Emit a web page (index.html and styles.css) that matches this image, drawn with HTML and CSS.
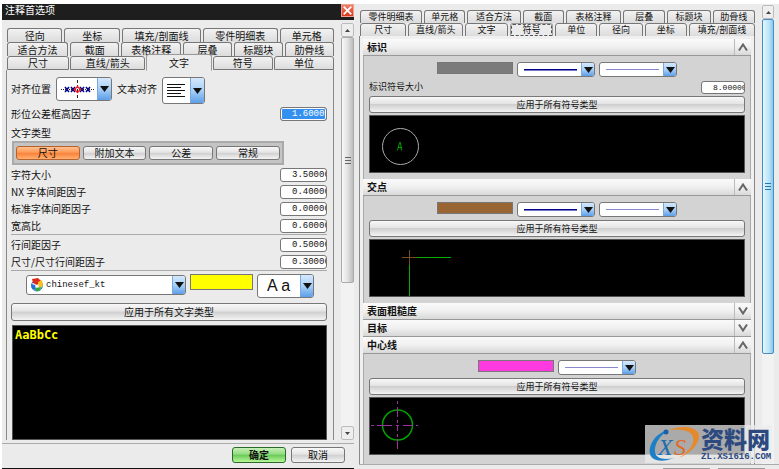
FILE: index.html
```html
<!DOCTYPE html>
<html lang="zh-CN">
<head>
<meta charset="utf-8">
<title>注释首选项</title>
<link rel="stylesheet" href="styles.css">
</head>
<body>
<svg class="defs" aria-hidden="true">
  <symbol id="caret" viewBox="0 0 9 6"><path d="M0 0h9L4.500 6z" fill="#111"/></symbol>
  <symbol id="chev-up" viewBox="0 0 10 8"><path d="M1 7.500L5 1.500L9 7.500" fill="none" stroke="#666" stroke-width="2"/></symbol>
  <symbol id="chev-down" viewBox="0 0 10 8"><path d="M1 .5L5 6.500L9 .5" fill="none" stroke="#666" stroke-width="2"/></symbol>
</svg>
<main class="desktop">
  <section class="dialog dialog-text">
    <header class="titlebar">
      <h1>注释首选项</h1>
      <button class="close" type="button" aria-label="关闭"><svg viewBox="0 0 13 13"><path d="M2 2l9 9M11 2l-9 9" stroke="#fff" stroke-width="2"/></svg></button>
    </header>
    <div class="work">
      <div class="content">
        <nav class="tabs">
          <div class="tab-row l1"><button type="button">径向</button><button type="button">坐标</button><button type="button">填充/剖面线</button><button type="button">零件明细表</button><button type="button">单元格</button></div>
          <div class="tab-row l2"><button type="button">适合方法</button><button type="button">截面</button><button type="button">表格注释</button><button type="button">层叠</button><button type="button">标题块</button><button type="button">肋骨线</button></div>
          <div class="tab-row l3"><button type="button">尺寸</button><button type="button">直线/箭头</button><button type="button" class="active">文字</button><button type="button">符号</button><button type="button">单位</button></div>
        </nav>
        <div class="panel">
          <div class="align-row">
            <label for="pos">对齐位置</label>
            <span class="combo combo-pos">
              <select id="pos"><option aria-label="中心"></option></select>
              <svg class="sample" viewBox="0 0 34 18"><path d="M0 9.500h34" stroke="#222" stroke-dasharray="1 1"/><path d="M16.500 0v18" stroke="#222" stroke-dasharray="3 2"/><path d="M4 7l4 5M8 7l-4 5M10 7l4 5M14 7l-4 5M19 7l4 5M23 7l-4 5M25 7l4 5M29 7l-4 5" stroke="#00008b" stroke-width="1.500"/><path d="M16.500 6.500l3 3l-3 3l-3-3z" fill="none" stroke="#f22" stroke-width="1.500"/></svg>
              <span class="arrow"><svg><use href="#caret"/></svg></span>
            </span>
            <label for="txt">文本对齐</label>
            <span class="combo combo-txt">
              <select id="txt"><option aria-label="左对齐"></option></select>
              <svg class="sample" viewBox="0 0 18 15"><path d="M0 1.500h18M0 4.500h14M0 7.500h18M0 10.500h14M0 13.500h18" stroke="#111"/></svg>
              <span class="arrow"><svg><use href="#caret"/></svg></span>
            </span>
          </div>
          <div class="fields">
            <label class="field">形位公差框高因子<input class="selected" value="1.60000"></label>
          </div>
          <p class="caption">文字类型</p>
          <div class="segments">
            <button type="button" class="btn on">尺寸</button><button type="button" class="btn">附加文本</button><button type="button" class="btn">公差</button><button type="button" class="btn">常规</button>
          </div>
          <div class="fields">
            <label class="field">字符大小<input value="3.50000"></label>
            <label class="field">NX 字体间距因子<input value="0.40000"></label>
            <label class="field">标准字体间距因子<input value="0.00000"></label>
            <label class="field">宽高比<input value="0.60000"></label>
          </div>
          <hr>
          <div class="fields">
            <label class="field">行间距因子<input value="0.50000"></label>
            <label class="field">尺寸/尺寸行间距因子<input value="0.30000"></label>
          </div>
          <hr>
          <div class="font-row">
            <span class="combo combo-font">
              <select aria-label="字体"><option>chinesef_kt</option></select>
              <svg class="font-icon" viewBox="0 0 14 14"><circle cx="7" cy="7.500" r="5.500" fill="#eaf4ff" stroke="#2a7fd0"/><path d="M2 1l6-1l3 3l-4 4l-4-2z" fill="#e02a20"/><path d="M8 4l4-2l1 6l-4 2z" fill="#f5c21a"/><path d="M1 6l4 1l1 5l-4-1z" fill="#2470d8"/><path d="M5 10l7-1l-3 4H6z" fill="#38a838"/></svg>
              <span class="arrow"><svg><use href="#caret"/></svg></span>
            </span>
            <button type="button" class="swatch yellow" aria-label="颜色"></button>
            <span class="combo combo-style">
              <select aria-label="字宽"><option>A a</option></select>
              <span class="arrow"><svg><use href="#caret"/></svg></span>
            </span>
          </div>
          <button type="button" class="btn apply">应用于所有文字类型</button>
          <div class="canvas preview">AaBbCc</div>
        </div>
      </div>
      <div class="scrollbar">
        <span class="step"><svg viewBox="0 0 5 3"><path d="M0 3h5L2.500 0z"/></svg></span>
        <span class="thumb"><i></i></span>
        <span class="step end"><svg viewBox="0 0 5 3"><path d="M0 0h5L2.500 3z"/></svg></span>
      </div>
    </div>
    <footer class="actions">
      <button type="button" class="btn ok">确定</button><button type="button" class="btn">取消</button>
    </footer>
  </section>

  <section class="dialog dialog-symbol">
    <div class="work">
      <div class="content">
        <nav class="tabs">
          <div class="tab-row r1"><button type="button">零件明细表</button><button type="button">单元格</button><button type="button">适合方法</button><button type="button">截面</button><button type="button">表格注释</button><button type="button">层叠</button><button type="button">标题块</button><button type="button">肋骨线</button></div>
          <div class="tab-row r2"><button type="button">尺寸</button><button type="button">直线/箭头</button><button type="button">文字</button><button type="button" class="active focus">符号</button><button type="button">单位</button><button type="button">径向</button><button type="button">坐标</button><button type="button">填充/剖面线</button></div>
        </nav>
        <div class="panel groups">
          <h2><span>标识</span><button type="button" aria-label="收起标识"><svg><use href="#chev-up"/></svg></button></h2>
          <div class="group">
            <div class="line-row">
              <button type="button" class="swatch gray" aria-label="标识颜色"></button>
              <span class="combo line"><select aria-label="标识线型"><option aria-label="实线"></option></select><span class="stroke dark"></span><span class="arrow"><svg><use href="#caret"/></svg></span></span>
              <span class="combo line"><select aria-label="标识线宽"><option aria-label="细"></option></select><span class="stroke light"></span><span class="arrow"><svg><use href="#caret"/></svg></span></span>
            </div>
            <label class="field">标识符号大小<input value="8.00000"></label>
            <button type="button" class="btn apply">应用于所有符号类型</button>
            <div class="canvas"><svg viewBox="0 0 150 57"><circle cx="30.500" cy="30.500" r="18" fill="none" stroke="#aaa"/><path d="M27.500 34.500l2-8h1l1 8M28 31.500h4" fill="none" stroke="#00a000"/></svg></div>
          </div>
          <h2><span>交点</span><button type="button" aria-label="收起交点"><svg><use href="#chev-up"/></svg></button></h2>
          <div class="group">
            <div class="line-row">
              <button type="button" class="swatch brown" aria-label="交点颜色"></button>
              <span class="combo line"><select aria-label="交点线型"><option aria-label="实线"></option></select><span class="stroke dark"></span><span class="arrow"><svg><use href="#caret"/></svg></span></span>
              <span class="combo line"><select aria-label="交点线宽"><option aria-label="细"></option></select><span class="stroke light"></span><span class="arrow"><svg><use href="#caret"/></svg></span></span>
            </div>
            <button type="button" class="btn apply">应用于所有符号类型</button>
            <div class="canvas"><svg viewBox="0 0 150 57"><path d="M39.500 56V17.500H81" fill="none" stroke="#00b000"/><path d="M32 17.500h15M39.500 10v15" stroke="#784e28"/></svg></div>
          </div>
          <h2><span>表面粗糙度</span><button type="button" aria-label="展开表面粗糙度"><svg><use href="#chev-down"/></svg></button></h2>
          <h2><span>目标</span><button type="button" aria-label="展开目标"><svg><use href="#chev-down"/></svg></button></h2>
          <h2><span>中心线</span><button type="button" aria-label="收起中心线"><svg><use href="#chev-up"/></svg></button></h2>
          <div class="group last">
            <div class="line-row">
              <button type="button" class="swatch pink" aria-label="中心线颜色"></button>
              <span class="combo line"><select aria-label="中心线线宽"><option aria-label="细"></option></select><span class="stroke light"></span><span class="arrow"><svg><use href="#caret"/></svg></span></span>
            </div>
            <button type="button" class="btn apply">应用于所有符号类型</button>
            <div class="canvas"><svg viewBox="0 0 150 57"><circle cx="27.500" cy="27" r="15" fill="none" stroke="#00a000" stroke-width="1.500"/><path d="M1 27.500h3M7 27.500h15M26 27.500h3M33 27.500h10M46 27.500h2M27.500 3v3M27.500 9v10M27.500 22v3M27.500 27v6M27.500 36v3M27.500 41v10" stroke="#a030a0"/></svg></div>
          </div>
        </div>
      </div>
      <div class="scrollbar blue">
        <span class="step"><svg viewBox="0 0 5 3"><path d="M0 3h5L2.500 0z"/></svg></span>
        <span class="thumb"><i></i></span>
      </div>
    </div>
    <footer class="edge"><i></i><i></i></footer>
    <aside class="brand">
      <svg viewBox="0 0 54 38"><path d="M22 5C10 7 1 19 3 29c2 8 14 8 24 4c-10 2-18 1-19-6C7 19 13 10 22 5z" fill="#1e7fc4"/><path d="M22 5c12-5 28-4 30 5c1 9-9 18-20 23c9-6 16-14 14-21c-2-7-13-8-24-7z" fill="#e58a2c"/><circle cx="19" cy="7" r="2.500" fill="#1b5fa8"/><text class="logo-x" x="11" y="30">X</text><text class="logo-s" x="27" y="30">S</text></svg>
      <p><strong>资料网</strong><span>ZL.XS1616.COM</span></p>
    </aside>
  </section>
</main>
</body>
</html>
```
FILE: styles.css
```css
* { box-sizing: border-box; }
body {
  margin: 0;
  background: #fff;
  color: #111;
  font: 10px/14px "Noto Sans CJK SC", sans-serif;
}
button, input, select { font: inherit; color: inherit; margin: 0; padding: 0; }
button { white-space: nowrap; }
h1, h2, p { margin: 0; font-size: inherit; }
svg { display: block; }
.defs { position: absolute; width: 0; height: 0; }

.desktop {
  display: grid;
  grid-template-columns: 352fr 425fr;
  min-height: 100vh;
  padding: 4px 0 0 2px;
}
.dialog { display: flex; flex-direction: column; background: #ebebeb; min-width: 0; }
.dialog-text { border-bottom: 1px solid #111; }
.work { flex: 1; display: grid; min-height: 0; }
.dialog-text .work { grid-template-columns: 1fr 13px; gap: 7px; padding-left: 4px; }
.content { display: flex; flex-direction: column; min-width: 0; }

/* Title bar */
.titlebar { display: flex; justify-content: space-between; height: 16px; background: #1e1e1e; }
.titlebar h1 { padding-left: 3px; color: #fff; font-weight: 400; line-height: 12px; }
.close { width: 13px; height: 13px; border: 1px solid #f0a090; background: linear-gradient(#f08068, #d8361c); }
.close svg { width: 11px; height: 11px; }

/* Tabs */
.tabs { padding: 8px 0 0 1px; }
.tab-row { display: grid; height: 14px; gap: 2px; }
.l1 { grid-template-columns: 56fr 56fr 80fr 75fr 55fr; }
.l2 { grid-template-columns: 62fr 50fr 61fr 49fr 50fr 50fr; }
.l3 { grid-template-columns: 62fr 75fr 65fr 60fr 60fr; gap: 1px; }
.r1 { grid-template-columns: 63fr 42fr 54fr 42fr 56fr 43fr 44fr 43fr; }
.r2 { grid-template-columns: 47fr 56fr 43fr 44fr 43fr 44fr 43fr 67fr; }
.tab-row button {
  display: flex;
  align-items: center;
  justify-content: center;
  min-width: 0;
  border: 1px solid #777;
  border-bottom: 0;
  border-radius: 3px 3px 0 0;
  background: linear-gradient(#f2f2f2, #dcdcdc);
  line-height: 12px;
}
.l3 button, .r2 button { border-bottom: 1px solid #777; }
.tab-row .active { border-color: #999; border-bottom-color: #ebebeb; background: #ebebeb; }
.l3 .active { margin-top: -2px; margin-bottom: -1px; }
.r2 .focus { outline: 1px dashed #555; outline-offset: -2px; }

/* Left panel */
.panel {
  flex: 1;
  display: flex;
  flex-direction: column;
  border: solid #888;
  border-width: 0 1px;
  padding: 7px 6px 0 4px;
}
.align-row { display: flex; align-items: flex-start; height: 27px; margin-bottom: 3px; line-height: 24px; gap: 5px; }
.fields { display: grid; gap: 3px; }
.field { display: flex; justify-content: space-between; align-items: center; height: 14px; }
.field input {
  width: 47px;
  height: 14px;
  padding-left: 11px;
  border: 1px solid #777;
  border-radius: 3px;
  background: #fff;
  font: 9px/12px "Liberation Mono", monospace;
}
.field .selected { background: #3390f0; color: #fff; box-shadow: inset 0 0 0 1px #fff; }
.caption { margin: 5px 0 2px; height: 13px; line-height: 13px; }
.segments {
  display: grid;
  grid-template-columns: repeat(4, 1fr);
  gap: 3px;
  width: 86%;
  height: 24px;
  margin: 0 0 3px 1px;
  padding: 3px 2px;
  border: 2px solid #aaa;
  background: #c4c4c4;
}
.panel hr { width: 100%; height: 1px; margin: 1px 0 3px; border: 0; background: #aaa; }

.btn {
  border: 1px solid #777;
  border-radius: 3px;
  background: linear-gradient(#f8f8f8, #e4e4e4 45%, #cfcfcf 50%, #f4f4f4);
  line-height: 12px;
}
.btn.on { border-color: #b8602c; background: linear-gradient(#ffc090, #ff9a58 45%, #f88038 50%, #ffb070); }
.btn.ok { border-color: #2c6a2c; background: linear-gradient(#c8f0b8, #90dc80 45%, #68c858 50%, #b8f898); font-weight: 700; }
.apply { width: 100%; height: 18px; flex: none; }

/* Drop-downs */
.combo {
  position: relative;
  display: flex;
  align-items: center;
  border: 1px solid #777;
  border-radius: 3px;
  background: #fff;
}
.combo select {
  flex: 1;
  min-width: 0;
  height: 100%;
  border: 0;
  background: none;
  appearance: none;
}
.sample, .font-icon, .stroke { position: absolute; pointer-events: none; }
.arrow {
  display: flex;
  align-items: center;
  justify-content: center;
  align-self: stretch;
  width: 13px;
  border-left: 1px solid #78a8dc;
  border-radius: 0 2px 2px 0;
  background: linear-gradient(#d4e8fc, #a8d0f8 50%, #5c9ee8);
  pointer-events: none;
}
.arrow svg { width: 9px; height: 6px; }
.combo-pos { width: 56px; height: 24px; }
.combo-pos .sample { left: 4px; width: 34px; height: 18px; }
.combo-txt { width: 43px; height: 27px; }
.combo-txt .sample { left: 4px; width: 18px; height: 15px; }
.combo-pos .arrow, .combo-txt .arrow { width: 14px; }

.font-row { display: flex; align-items: flex-start; gap: 4px; height: 24px; padding: 0 13px 0 15px; margin-bottom: 5px; }
.combo-font { flex: 1; height: 20px; margin-top: 1px; }
.combo-font select { padding-left: 19px; font: 9px/18px "Liberation Mono", monospace; }
.font-icon { left: 3px; width: 14px; height: 14px; }
.combo-style { width: 57px; height: 24px; }
.combo-style select { padding-left: 9px; font: 16px/22px "Liberation Sans", sans-serif; }
.swatch { width: 63px; height: 16px; border: 1px solid #777; }
.yellow { background: #ff0; }
.gray { background: #7b7b7b; }
.brown { background: #996633; }
.pink { background: #ff3ae0; }

.canvas { overflow: hidden; background: #000; border: 1px solid #555; }
.preview {
  flex: 1;
  margin: 4px 0 0 1px;
  padding: 2px;
  color: #ff0;
  font: bold 12px/14px "DejaVu Sans Mono", monospace;
}

/* Scroll bars */
.scrollbar { display: flex; flex-direction: column; margin-top: 3px; background: #f2f2f2; }
.step { display: flex; align-items: center; justify-content: center; height: 14px; border: 1px solid #bbb; border-radius: 2px; background: #eee; }
.step svg { width: 5px; height: 3px; fill: #444; }
.end { margin-top: auto; }
.thumb {
  display: flex;
  align-items: center;
  justify-content: center;
  height: 59%;
  border: 1px solid #aaa;
  border-radius: 2px;
  background: linear-gradient(90deg, #f8f8f8, #e2e2e2 50%, #bcbcbc);
}
.thumb i { width: 6px; height: 7px; background: repeating-linear-gradient(#666 0 1px, transparent 1px 3px); }
.blue .thumb { height: 73%; border-color: #4a8cc0; background: linear-gradient(90deg, #e4f6ff, #b8e4fa 60%, #8cc8ec); }
.blue .thumb i { background: repeating-linear-gradient(#2a78a8 0 1px, transparent 1px 3px); }

.actions { display: flex; justify-content: flex-end; gap: 5px; margin-top: 3px; padding: 3px 9px 5px; border-top: 1px solid #aaa; }
.actions .btn { width: 54px; height: 16px; }

/* Right dialog */
.dialog-symbol { position: relative; font-size: 9px; padding-left: 5px; }
.dialog-symbol .work { grid-template-columns: 1fr 12px; gap: 7px; padding-right: 5px; }
.dialog-symbol .tabs { padding: 6px 0 0 1px; }
.dialog-symbol .tab-row { height: 13px; }
.dialog-symbol .scrollbar { margin-top: 1px; }
.groups { padding: 3px 3px 0; background: #f0f0f0; }
.groups h2 {
  display: flex;
  justify-content: space-between;
  flex: none;
  height: 17px;
  padding-left: 4px;
  border-bottom: 1px solid #999;
  background: linear-gradient(#fafafa, #f0f0f0 50%, #d8d8d8);
  font-size: 10px;
  line-height: 16px;
}
.groups h2 button { display: flex; align-items: center; justify-content: center; width: 17px; border: 0; border-left: 1px solid #bbb; background: none; }
.groups h2 svg { width: 10px; height: 8px; }
.group { padding: 6px 5px; background: #d3d3d3; border-left: 1px solid #aaa; border-right: 1px solid #aaa; }
.last { flex: 1; }
.line-row { display: flex; justify-content: center; gap: 4px; height: 15px; margin-bottom: 3px; }
.line-row .swatch { width: 76px; height: 12px; }
.line { width: 78px; height: 15px; }
.stroke { left: 6px; width: 53px; height: 1px; }
.dark { background: #00008b; box-shadow: 0 1px #7777c0; }
.light { background: #8888cc; }
.group .field { margin: 0 0 2px; }
.group .field input { width: 44px; height: 13px; font-size: 8px; }
.group .canvas { height: 58px; margin-top: 2px; }
.group .canvas svg { width: 150px; height: 57px; }
.group .apply { height: 17px; display: block; }
.edge { display: flex; justify-content: flex-end; gap: 8px; height: 5px; padding: 3px 14px 0 0; border-top: 1px solid #aaa; }
.edge i { width: 47px; height: 1px; background: #999; }

/* Site mark over the lower right corner */
.brand {
  position: absolute;
  right: 7px;
  bottom: 6px;
  display: flex;
  align-items: flex-start;
  width: 127px;
  height: 38px;
  padding-left: 2px;
  background: rgba(235, 235, 235, .72);
  color: #2c4a80;
}
.brand svg { width: 54px; height: 38px; flex: none; }
.brand strong { display: block; font: 900 23px/26px "Noto Sans CJK SC", sans-serif; }
.brand span { display: block; font: bold 9px/12px "Liberation Mono", monospace; }
.logo-x, .logo-s { font: italic 24px "Liberation Serif", serif; }
.logo-x { fill: #1b6cb4; }
.logo-s { fill: #e06a28; }
```
